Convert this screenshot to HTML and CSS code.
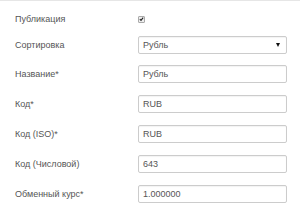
FILE: index.html
```
<!DOCTYPE html>
<html>
<head>
<meta charset="utf-8">
<link rel="stylesheet" href="styles.css">
</head>
<body>
<form class="form">
  <div class="row row-check">
    <label class="label">Публикация</label>
    <div class="control"><span class="check"><svg width="6" height="6" viewBox="0 0 6 6"><path d="M1 3.2 L2.4 4.6 L5 1.4" fill="none" stroke="#222" stroke-width="1.3"/></svg></span></div>
  </div>
  <div class="row row-select">
    <label class="label">Сортировка</label>
    <div class="control"><div class="field select"><span>Рубль</span><span class="arrow"></span></div></div>
  </div>
  <div class="row">
    <label class="label">Название*</label>
    <div class="control"><div class="field">Рубль</div></div>
  </div>
  <div class="row">
    <label class="label">Код*</label>
    <div class="control"><div class="field">RUB</div></div>
  </div>
  <div class="row">
    <label class="label">Код (ISO)*</label>
    <div class="control"><div class="field">RUB</div></div>
  </div>
  <div class="row">
    <label class="label">Код (Числовой)</label>
    <div class="control"><div class="field">643</div></div>
  </div>
  <div class="row">
    <label class="label">Обменный курс*</label>
    <div class="control"><div class="field">1.000000</div></div>
  </div>
</form>
</body>
</html>
```
FILE: styles.css
```
html, body {
  margin: 0;
  padding: 0;
  background: #fff;
}
body {
  font-family: "Liberation Sans", Arial, sans-serif;
  font-size: 9px;
  color: #555;
  border-top: 1px solid #e6e6e6;
  width: 300px;
  height: 218px;
}
.form {
  display: flex;
  flex-direction: column;
  gap: 12px;
  padding-top: 9px;
}
.row {
  display: grid;
  grid-template-columns: 123px 149px;
  padding-left: 15px;
  height: 18px;
  align-items: center;
}
.row-check {
  margin-bottom: -4px;
}
.row-select {
  margin-bottom: -1px;
}
.label {
  color: #555;
}
.control {
  display: flex;
  align-items: center;
  height: 18px;
}
.check {
  width: 5px;
  height: 5px;
  border: 1px solid #aaa;
  border-radius: 1px;
  background: #eee;
  display: flex;
  align-items: center;
  justify-content: center;
  overflow: hidden;
}
.check svg { display: block; }
.field {
  box-sizing: border-box;
  width: 149px;
  height: 18px;
  border: 1px solid #ccc;
  border-radius: 2px;
  box-shadow: inset 0 1px 1px rgba(0,0,0,0.05);
  padding: 0 4px;
  display: flex;
  align-items: center;
  color: #555;
}
.select {
  justify-content: space-between;
}
.arrow {
  width: 0;
  height: 0;
  border-left: 2.5px solid transparent;
  border-right: 2.5px solid transparent;
  border-top: 4px solid #111;
  margin-right: 2px;
}
```
